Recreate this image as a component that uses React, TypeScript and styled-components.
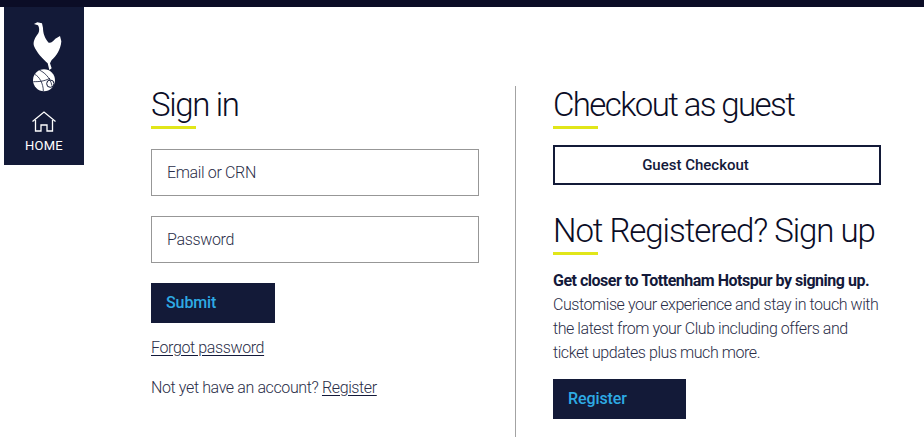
import React from "react";
import styled, { createGlobalStyle } from "styled-components";

const Global = createGlobalStyle`
  html, body { margin: 0; padding: 0; background: #fff; }
  body { font-family: Roboto, "Liberation Sans", sans-serif; color: #13193a; overflow: hidden; }
  * { box-sizing: border-box; }
`;

const TopBar = styled.div`height: 7px; background: #0b0d26;`;
const Layout = styled.div`display: flex; align-items: flex-start; padding-left: 4px;`;
const Sidebar = styled.nav`
  width: 80px; height: 158px; background: #131a38; color: #fff;
  display: flex; flex-direction: column; align-items: center; padding-top: 9px; flex: none;
`;
const HomeLabel = styled.span`font-size: 13px; line-height: 16px; letter-spacing: 0.2px; margin-top: 6px;`;
const HomeIcon = styled.svg`display: block; margin-top: 15px;`;
const Crest = styled.svg`display: block; margin-left: 4px;`;
const Main = styled.main`display: flex; margin: 79px 0 0 67px;`;
const Left = styled.section`width: 328px;`;
const Divider = styled.div`width: 1px; height: 351px; background: #a3a3a3; margin: 0 37px 0 36px; flex: none;`;
const Right = styled.section`width: 328px;`;
const Heading = styled.h2`
  margin: 0; font-size: 33px; line-height: 37px; font-weight: 300; color: #0b0d26; letter-spacing: ${p => p.$track ?? -1.05}px;
  padding-bottom: 6px; white-space: nowrap; position: relative;
  &::after { content: ""; position: absolute; left: 0; bottom: 0; width: 45px; height: 3px; background: #e1e619; }
`;
const Field = styled.div`
  height: 47px; border: 1px solid #979797; padding-left: 15px; display: flex; align-items: center;
  font-size: 16px; font-weight: 300; color: #2a2e48; letter-spacing: -0.35px; margin-top: ${p => p.$top}px;
`;
const Solid = styled.button`
  display: flex; align-items: center; height: 40px; width: ${p => p.$w}px; background: #131a38; border: 0; padding: 0 0 2px 15px;
  color: #2eaae4; font: 500 16px Roboto, sans-serif; letter-spacing: -0.1px; margin-top: ${p => p.$top}px;
`;
const Line = styled.p`margin: ${p => p.$top}px 0 0; font-size: 16px; line-height: 20px; font-weight: 300; color: #2a2e48; letter-spacing: -0.38px; white-space: nowrap;`;
const Anchor = styled.a`color: #2a2e48; text-decoration: underline; text-decoration-color: #13193a; text-underline-offset: 2px;`;
const Outline = styled.button`
  display: block; width: 100%; height: 40px; margin-top: 16px; border: 2px solid #131a38; background: #fff; color: #13193a;
  font: 500 15px Roboto, sans-serif; letter-spacing: 0; padding: 0 43px 0 0;
`;
const Sub = styled(Heading)`margin-top: 27px;`;
const Blurb = styled.p`margin: 14px 0 0; font-size: 16px; line-height: 24px; font-weight: 300; color: #2a2e48; letter-spacing: -0.44px; white-space: nowrap;`;
const Strong = styled.strong`display: block; font-weight: 700; color: #13193a; letter-spacing: -0.49px;`;

export default function App() {
  return (
    <>
      <Global />
      <TopBar />
      <Layout>
        <Sidebar>
          <Crest width="44" height="80" viewBox="72 48 132 240" fill="#fff">
            <path d="M102 72 L112 67 L126 70 L129 84 C129 98 134 116 146 128 C154 130 160 122 166 116 L180 108 L184 124 C182 150 168 170 155 180 L150 190 L155 205 L148 210 L143 190 C128 176 110 158 102 138 C98 125 106 112 115 100 C119 92 118 82 114 76 Z" />
            <circle cx="132" cy="241" r="33" />
            <path d="M104 223 C118 229 130 251 130 273 M118 210 C132 217 150 231 156 257 M100 245 C115 245 130 245 150 235" fill="none" stroke="#131a38" strokeWidth="2.4" />
            <circle cx="151" cy="251" r="11" fill="none" stroke="#131a38" strokeWidth="3" />
          </Crest>
          <HomeIcon width="24" height="21" viewBox="0 0 24 21" fill="none" stroke="#fff" strokeWidth="1.3">
            <path d="M0.5 10.5 L12 1 L23.5 10.5" />
            <path d="M3.5 9 V20 H9 V14 H15 V20 H20.5 V9" />
          </HomeIcon>
          <HomeLabel>HOME</HomeLabel>
        </Sidebar>
        <Main>
          <Left>
            <Heading $track={-1.35}>Sign in</Heading>
            <Field $top={20}>Email or CRN</Field>
            <Field $top={20}>Password</Field>
            <Solid $w={124} $top={20}>Submit</Solid>
            <Line $top={15}><Anchor>Forgot password</Anchor></Line>
            <Line $top={20}>Not yet have an account? <Anchor>Register</Anchor></Line>
          </Left>
          <Divider />
          <Right>
            <Heading $track={-1.6}>Checkout as guest</Heading>
            <Outline>Guest Checkout</Outline>
            <Sub>Not Registered? Sign up</Sub>
            <Blurb>
              <Strong>Get closer to Tottenham Hotspur by signing up.</Strong>
              Customise your experience and stay in touch with<br />
              the latest from your Club including offers and<br />
              ticket updates plus much more.
            </Blurb>
            <Solid $w={133} $top={14}>Register</Solid>
          </Right>
        </Main>
      </Layout>
    </>
  );
}
